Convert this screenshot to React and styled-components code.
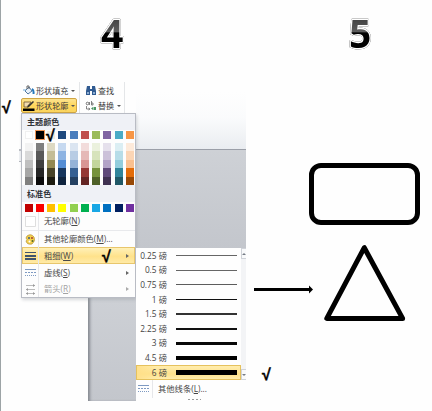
import React from "react";
import styled, { createGlobalStyle } from "styled-components";

const Global = createGlobalStyle`
  * { box-sizing: border-box; }
  body { margin: 0; background: #fefefe; overflow: hidden; }
`;

const Slide = styled.main`
  position: relative;
  width: 432px;
  height: 411px;
  overflow: hidden;
  background: #fefefe;
  border-left: 1px solid #9da4a6;
  font: 8.3px/12px "Open Sans", "Noto Sans CJK SC", sans-serif;
  color: #454545;
`;

/* Objects are placed freely on the slide canvas. */
const Placed = styled.div`
  position: absolute;
  left: ${(p) => p.$x - 1}px;
  top: ${(p) => p.$y}px;
`;

const DigitArt = styled.svg`
  display: block;
  width: 44px;
  height: 60px;
  filter: drop-shadow(0 0 0.5px #666) drop-shadow(0 0 0.6px #aaa);
  text {
    font: 700 39px "Open Sans", sans-serif;
    stroke: #fff;
    stroke-width: 2.6px;
    stroke-linejoin: round;
    paint-order: stroke;
  }
`;

const CheckMark = styled.span`
  display: block;
  width: 12px;
  height: 13px;
  font: 700 16px/13px "Liberation Sans", sans-serif;
  -webkit-text-stroke: 0.4px #000;
  color: #000;
`;

const Workspace = styled.div`
  width: 110px;
  height: 58px;
  background: linear-gradient(#fefefe, #fafbfc 45%, #e9ecf0);
`;

const Page = styled.div`
  width: ${(p) => p.$w}px;
  height: ${(p) => p.$h}px;
  background: linear-gradient(#ced1d6, #c3c6cc);
  border-top: ${(p) => (p.$edge === "top" ? "1px solid #9b9fa8" : "0")};
  box-shadow: ${(p) => (p.$edge === "left" ? "inset 3px 0 3px -1px #858990" : "none")};
`;

const Sliver = styled.div`
  width: 4px;
  height: 13px;
  border-top: 2px solid #babdc4;
  border-bottom: 1px solid #b3b6bc;
  background: #eff1f4;
`;

const Ribbon = styled.div`
  display: grid;
  grid-template-columns: 58px 45px;
  grid-template-rows: 15px 15px;
`;

const Command = styled.button`
  display: flex;
  align-items: center;
  justify-content: flex-start;
  gap: 1px;
  margin: 0 0 0 ${(p) => (p.$tail ? 4 : 0)}px;
  padding: 0 1px;
  border: 1px solid ${(p) => (p.$active ? "#d0a543" : "transparent")};
  border-radius: 2px;
  background: ${(p) => (p.$active ? "linear-gradient(#fce391, #ffd75c 50%, #fbd560)" : "transparent")};
  width: ${(p) => (p.$tail ? 42 : 56)}px;
  height: 15px;
  font: inherit;
  font-size: 8.1px;
  white-space: nowrap;
  color: #3d3d3d;
  svg, span { flex: none; }
`;

const Divider = styled.div`
  width: 1px;
  height: 31px;
  background: #e4e6e8;
`;

const Caret = styled.i`
  margin-left: 2px;
  border: 2px solid transparent;
  border-top-color: #555;
  border-bottom: 0;
`;

const Menu = styled.section`
  width: 115px;
  height: 185px;
  display: flex;
  flex-direction: column;
  background: #fdfdfd;
  border: 1px solid #b9bcc4;
  box-shadow: 1px 2px 3px #8c909855;
`;

const Heading = styled.h2`
  margin: 0;
  padding-left: 5px;
  flex: none;
  height: ${(p) => p.$h}px;
  font-size: 8.1px;
  line-height: ${(p) => p.$h}px;
  font-weight: 600;
  color: #303238;
  background: #eff1f6;
`;

const Swatches = styled.div`
  display: grid;
  grid-template-columns: repeat(10, 8px);
  column-gap: 3.25px;
  padding-left: 2.5px;
  margin-top: ${(p) => p.$top}px;
  height: ${(p) => p.$h}px;
  flex: none;
`;

const Swatch = styled.i`
  background: ${(p) => p.$c};
  outline: ${(p) => (p.$selected ? "1.5px solid #ed9455" : p.$c === "#ffffff" ? "1px solid #f0f0f0" : "none")};
  outline-offset: ${(p) => (p.$selected ? 0 : -1)}px;
`;

const Ramp = styled.div`
  display: grid;
  grid-template-rows: repeat(5, 1fr);
`;

const MenuRow = styled.div`
  flex: none;
  height: ${(p) => p.$h}px;
  display: grid;
  grid-template-columns: 16px 1fr 10px;
  align-items: center;
  white-space: nowrap;
  color: ${(p) => (p.$disabled ? "#a2a2a2" : "#484848")};
  background: ${(p) => (p.$active ? "linear-gradient(#fff2bd, #ffe28b 55%, #ffebaa)" : "transparent")};
  box-shadow: ${(p) => (p.$active ? "inset 0 0 0 1px #e8c66c" : "none")};
  border-top: ${(p) => (p.$rule ? "1px solid #e8e9ec" : "0")};
  svg { margin-left: 3px; }
`;

const RowLabel = styled.span`
  height: 100%;
  display: flex;
  align-items: center;
  padding-left: 5px;
  border-left: 1px solid #e6e7ea;
`;

const Pointer = styled.i`
  width: 0;
  border: 2px solid transparent;
  border-left: 3px solid ${(p) => (p.$disabled ? "#aaa" : "#666")};
  border-right: 0;
  margin-left: 1px;
`;

const Submenu = styled.section`
  width: 110px;
  height: 153px;
  display: grid;
  grid-template-columns: 105px 5px;
  grid-template-rows: 132px 21px;
  background: #fefefe;
`;

const Weights = styled.div`
  display: grid;
  grid-template-rows: repeat(9, 14.6px);
  padding-top: 0.5px;
`;

const Weight = styled.div`
  display: grid;
  grid-template-columns: 31px 61px;
  column-gap: 9px;
  align-items: center;
  color: #444;
  background: ${(p) => (p.$active ? "linear-gradient(90deg, #ffe08a, transparent 20%), linear-gradient(#ffeeb2, #ffe28c 60%, #ffefb5)" : "transparent")};
  box-shadow: ${(p) => (p.$active ? "inset 0 0 0 1px #e5c15d" : "none")};
  span { text-align: right; white-space: nowrap; }
`;

const Stroke = styled.i`
  height: ${(p) => p.$h}px;
  background: ${(p) => p.$c};
`;

const Scrollbar = styled.div`
  display: flex;
  flex-direction: column;
  justify-content: space-between;
  background: #f3f4f6;
`;

const ScrollButton = styled.div`
  height: 11px;
  border: 1px solid #d0d3d9;
  border-right: 0;
  background: #f9fafb;
  display: grid;
  place-items: center;
  i {
    border: 2px solid transparent;
    border-${(p) => (p.$up ? "bottom" : "top")}-color: #777c86;
    border-${(p) => (p.$up ? "top" : "bottom")}: 0;
  }
`;

const Footer = styled.div`
  grid-column: 1 / 3;
  display: grid;
  grid-template-columns: 16px 1fr;
  grid-template-rows: 18px 3px;
  align-items: center;
  svg { margin-left: 2px; }
`;

const Grip = styled.div`
  grid-column: 1 / 3;
  justify-self: center;
  width: 13px;
  height: 1px;
  margin-left: 6px;
  background: repeating-linear-gradient(90deg, #999 0 2px, transparent 2px 4px);
`;

const RoundedBox = styled.div`
  width: 111px;
  height: 62px;
  border: 5px solid #000;
  border-radius: 12px;
`;

const Shape = styled.svg`
  display: block;
`;

const theme = ["#ffffff", "#000000", "#eeece1", "#1f497d", "#4a7ebd", "#c0504d", "#9bbb59", "#8064a2", "#4bacc6", "#f79646"];
const ramps = [
  ["#f2f2f2", "#d9d9d9", "#bfbfbf", "#a6a6a6", "#7f7f7f"],
  ["#7f7f7f", "#595959", "#3f3f3f", "#262626", "#0c0c0c"],
  ["#ddd9c3", "#c4bd97", "#938953", "#494429", "#1d1b10"],
  ["#c6d9f0", "#8db3e2", "#548dd4", "#17365d", "#0f243e"],
  ["#dbe5f1", "#b8cce4", "#95b3d7", "#366092", "#244061"],
  ["#f2dcdb", "#e5b9b7", "#d99694", "#953734", "#632423"],
  ["#ebf1dd", "#d7e3bc", "#c3d69b", "#76923c", "#4f6128"],
  ["#e5e0ec", "#ccc1d9", "#b2a2c7", "#5f497a", "#3f3151"],
  ["#dbeef3", "#b7dde8", "#92cddc", "#31859b", "#205867"],
  ["#fdeada", "#fbd5b5", "#fac08f", "#e36c09", "#974806"],
];
const standard = ["#c00000", "#fb0000", "#ffc000", "#ffff00", "#92d050", "#00b050", "#19a7e5", "#0070c0", "#002060", "#7030a0"];
const weights = [
  ["0.25", 1, "#666"],
  ["0.5", 1, "#666"],
  ["0.75", 1, "#5c5c5c"],
  ["1", 1.6, "#111"],
  ["1.5", 2, "#333"],
  ["2.25", 2, "#111"],
  ["3", 3, "#080808"],
  ["4.5", 4, "#000"],
  ["6", 5, "#000"],
];

function Digit({ value }) {
  const id = "fill" + value;
  return (
    <DigitArt viewBox="0 0 44 60">
      <defs>
        <linearGradient id={id} gradientUnits="userSpaceOnUse" x1="0" y1="15" x2="0" y2="43">
          <stop offset="0" stopColor="#444" />
          <stop offset=".42" stopColor="#5c5c5c" />
          <stop offset=".46" stopColor="#000" />
          <stop offset="1" stopColor="#000" />
        </linearGradient>
      </defs>
      <text x="10" y="43" fill={`url(#${id})`}>{value}</text>
    </DigitArt>
  );
}

const BucketIcon = () => (
  <svg width="12" height="11" viewBox="0 0 12 11" fill="none">
    <path d="m2 6 4-4 3 4-4 3z" fill="#e8f1fa" stroke="#53779f" />
    <path d="M4 4V1h2v3" stroke="#666" />
    <path d="M9 4q2 1 1.5 5" stroke="#2678bd" strokeWidth="2" />
    <path d="M0 5h3" stroke="#70a8d5" />
  </svg>
);
const PenIcon = () => (
  <svg width="12" height="12" viewBox="0 0 12 12">
    <path d="M1 7V2h7L4 7z" fill="#f3ddb0" stroke="#6e5632" strokeWidth=".8" />
    <path d="m4 8 1-2.5L10 1l1 1-5 5z" fill="#333" />
    <path d="M0 8.5h11.5V11H0z" fill="#000" />
  </svg>
);
const FindIcon = () => (
  <svg width="12" height="11" viewBox="0 0 12 11">
    <path d="M2 1h3v3h2V1h3l1 5v4H7V6H5v4H1V6z" fill="#315b91" />
    <path d="M2 7h2v2H2zM8 7h2v2H8z" fill="#8dadd1" />
  </svg>
);
const ReplaceIcon = () => (
  <svg width="12" height="11" viewBox="0 0 12 11" fill="none">
    <circle cx="2.5" cy="3.5" r="1.3" stroke="#555" strokeWidth=".8" />
    <path d="M4.5 2v3M6.5 1v4h1.5V3H6.5M1.5 6v3h3M3.5 8l1.5 1-1.5 1" stroke="#666" strokeWidth=".8" />
    <path d="M6 8.5 8 7v3zM8.5 7H11v3H8.5z" fill="#4c9664" />
  </svg>
);
const NoneIcon = () => (
  <svg width="11" height="11" viewBox="0 0 11 11">
    <path d="M.5.5h10v10H.5z" fill="#fff" stroke="#dedede" />
  </svg>
);
const PaletteIcon = () => (
  <svg width="11" height="11" viewBox="0 0 11 11">
    <path d="M2 2q4-3 7 1 2 4-2 7-5 1-6-3 2-1 0-3z" fill="#f3cf4c" stroke="#b39135" strokeWidth=".7" />
    <circle cx="4" cy="4" r="1" fill="#365b86" />
    <circle cx="7" cy="4" r="1" fill="#a43f2c" />
    <circle cx="7.5" cy="7" r="1" fill="#526a2c" />
    <circle cx="4.5" cy="7.5" r="1" fill="#fff" />
  </svg>
);
const WeightIcon = () => (
  <svg width="11" height="10" viewBox="0 0 11 10">
    <path d="M0 1h11v1H0zM0 4h11v2H0zM0 7h11v2H0z" fill="#40536d" />
  </svg>
);
const DashIcon = () => (
  <svg width="11" height="10" viewBox="0 0 11 10" stroke="#7e9ac2">
    <path d="M0 1.5h11" />
    <path d="M0 4.5h11" strokeDasharray="2 1" />
    <path d="M0 7.5h11" strokeDasharray="1 1" />
  </svg>
);
const ArrowsIcon = () => (
  <svg width="11" height="11" viewBox="0 0 11 11">
    <path d="M1 1.5h9M1 5.5h9M1 9.5h9" stroke="#aaa" strokeWidth=".8" />
    <path d="M8 0v3l2-1.5zM3 4v3L1 5.5zM3 8v3L1 9.5zM8 8v3l2-1.5z" fill="#999" />
  </svg>
);

export default function App() {
  return (
    <>
      <Global />
      <Slide>
        <Placed $x={91} $y={5}><Digit value="4" /></Placed>
        <Placed $x={338.5} $y={5}><Digit value="5" /></Placed>

        <Placed $x={136} $y={92}><Workspace /></Placed>
        <Placed $x={136} $y={149}><Page $w={110} $h={100} $edge="top" /></Placed>
        <Placed $x={88} $y={290}><Page $w={48} $h={111} $edge="left" /></Placed>
        <Placed $x={19} $y={149}><Sliver /></Placed>

        <Placed $x={21} $y={83}>
          <Ribbon>
            <Command><BucketIcon /><span>形状填充</span><Caret /></Command>
            <Command $tail><FindIcon /><span>查找</span></Command>
            <Command $active><PenIcon /><span>形状轮廓</span><Caret /></Command>
            <Command $tail><ReplaceIcon /><span>替换</span><Caret /></Command>
          </Ribbon>
        </Placed>
        <Placed $x={79} $y={82}><Divider /></Placed>
        <Placed $x={124} $y={82}><Divider /></Placed>

        <Placed $x={21} $y={113}>
          <Menu>
            <Heading $h={16}>主题颜色</Heading>
            <Swatches $top={1} $h={8}>
              {theme.map((c, i) => <Swatch key={c} $c={c} $selected={i === 1} />)}
            </Swatches>
            <Swatches $top={4} $h={42}>
              {ramps.map((ramp) => (
                <Ramp key={ramp[0]}>{ramp.map((c) => <Swatch key={c} $c={c} />)}</Ramp>
              ))}
            </Swatches>
            <Heading $h={17}>标准色</Heading>
            <Swatches $top={2} $h={8}>
              {standard.map((c) => <Swatch key={c} $c={c} />)}
            </Swatches>
            <MenuRow $h={18}><NoneIcon /><RowLabel>无轮廓(<u>N</u>)</RowLabel></MenuRow>
            <MenuRow $h={17} $rule><PaletteIcon /><RowLabel>其他轮廓颜色(<u>M</u>)...</RowLabel></MenuRow>
            <MenuRow $h={17} $active><WeightIcon /><RowLabel>粗细(<u>W</u>)</RowLabel><Pointer /></MenuRow>
            <MenuRow $h={17}><DashIcon /><RowLabel>虚线(<u>S</u>)</RowLabel><Pointer /></MenuRow>
            <MenuRow $h={16} $disabled><ArrowsIcon /><RowLabel>箭头(<u>R</u>)</RowLabel><Pointer $disabled /></MenuRow>
          </Menu>
        </Placed>

        <Placed $x={136} $y={248}>
          <Submenu>
            <Weights>
              {weights.map(([label, h, c]) => (
                <Weight key={label} $active={label === "6"}>
                  <span>{label} 磅</span>
                  <Stroke $h={h} $c={c} />
                </Weight>
              ))}
            </Weights>
            <Scrollbar>
              <ScrollButton $up><i /></ScrollButton>
              <ScrollButton><i /></ScrollButton>
            </Scrollbar>
            <Footer>
              <DashIcon />
              <RowLabel>其他线条(<u>L</u>)...</RowLabel>
              <Grip />
            </Footer>
          </Submenu>
        </Placed>

        <Placed $x={2} $y={101}><CheckMark>√</CheckMark></Placed>
        <Placed $x={46} $y={129}><CheckMark>√</CheckMark></Placed>
        <Placed $x={102} $y={250}><CheckMark>√</CheckMark></Placed>
        <Placed $x={262} $y={368}><CheckMark>√</CheckMark></Placed>

        <Placed $x={254} $y={284}>
          <Shape width="60" height="11">
            <path d="M0 5.5h56" stroke="#000" strokeWidth="3" />
            <path d="m55 1.5 4 4-4 4z" />
          </Shape>
        </Placed>
        <Placed $x={309} $y={163}><RoundedBox /></Placed>
        <Placed $x={322} $y={243}>
          <Shape width="86" height="80" fill="none" stroke="#000" strokeWidth="5" strokeLinejoin="round">
            <path d="M42.3 4.7 4.8 75.4h75.8z" />
          </Shape>
        </Placed>
      </Slide>
    </>
  );
}
